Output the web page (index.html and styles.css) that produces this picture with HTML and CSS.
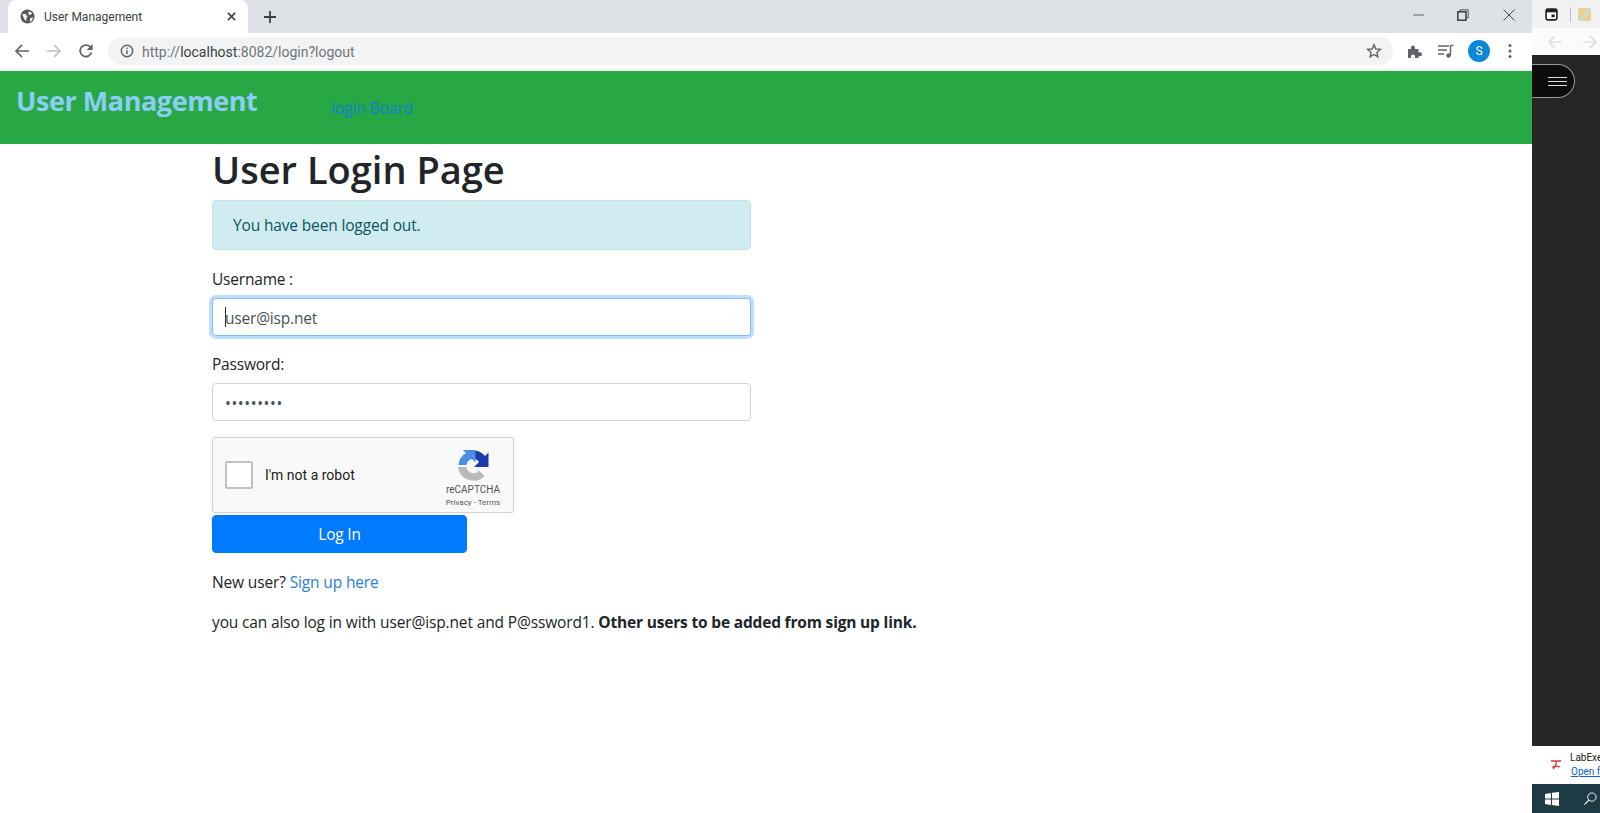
FILE: index.html
```html
<!DOCTYPE html>
<html lang="en">
<head>
    <meta charset="UTF-8">
    <title>User Management</title>
    <link rel="stylesheet" href="styles.css">
</head>
<body>
<div class="screen">
    <div class="browser">
        <div class="tabstrip">
            <div class="tab">
                <svg class="favicon" viewBox="0 0 16 16"><circle cx="8" cy="8" r="7.500" fill="#55595e"/><path d="M2.500 5.500l3-.5 2.500 3-1.500 2 .5 3-2.500-2zM10 2.500l3 2-2 2-2.500-1zM11 9.500l3-.5-1.500 3.500-2 1z" fill="#fff"/></svg>
                <span class="tab-title">User Management</span>
                <svg class="tab-close" viewBox="0 0 10 10"><path d="M1 1l8 8M9 1l-8 8" stroke="#3c4043" stroke-width="1.700"/></svg>
            </div>
            <svg class="newtab" viewBox="0 0 14 14"><path d="M7 1v12M1 7h12" stroke="#3c4043" stroke-width="1.800"/></svg>
            <div class="winctrls">
                <svg viewBox="0 0 12 12"><path d="M0 6h11" stroke="#777" stroke-width="1.200"/></svg>
                <svg viewBox="0 0 12 12"><path d="M3 2.500V.8h8.200V9H9.500" fill="none" stroke="#555" stroke-width="1"/><rect x=".8" y="2.800" width="8.200" height="8.400" fill="none" stroke="#222" stroke-width="1.300"/></svg>
                <svg viewBox="0 0 12 12"><path d="M.5.500l11 11M11.500.5l-11 11" stroke="#444" stroke-width="1"/></svg>
            </div>
        </div>
        <div class="toolbar">
            <svg class="tool" viewBox="0 0 16 16"><path d="M15 8H2M8 2L2 8l6 6" fill="none" stroke="#5f6368" stroke-width="1.700"/></svg>
            <svg class="tool" viewBox="0 0 16 16"><path d="M1 8h13M8 2l6 6-6 6" fill="none" stroke="#bdc1c6" stroke-width="1.700"/></svg>
            <svg class="tool" viewBox="0 0 16 16"><path d="M13.500 9.500A5.800 5.800 0 1 1 12 3.700L14 5.700" fill="none" stroke="#5f6368" stroke-width="1.700"/><path d="M14.600 1v6h-6z" fill="#5f6368"/></svg>
            <div class="omnibox">
                <svg class="info" viewBox="0 0 14 14"><circle cx="7" cy="7" r="5.700" fill="none" stroke="#5f6368" stroke-width="1.500"/><path d="M7 6.200v4M7 3.500v1.500" stroke="#5f6368" stroke-width="1.500"/></svg>
                <span class="url">http://<b>localhost</b>:8082/login?logout</span>
                <svg class="star" viewBox="0 0 16 16"><path d="M8 1.800l1.800 4.200 4.500.4-3.400 3 1 4.400L8 11.500l-3.900 2.300 1-4.400-3.400-3 4.500-.4z" fill="none" stroke="#5f6368" stroke-width="1.400"/></svg>
            </div>
            <svg class="tool ext" viewBox="0 0 16 16"><path d="M1 6h3V4.500a2 2 0 0 1 4 0V6h3.500v3.200H13a2 2 0 0 1 0 4h-1.500V15H8v-1.500a2 2 0 0 0-4 0V15H1z" fill="#5f6368"/></svg>
            <svg class="tool media" viewBox="0 0 16 16"><path d="M0 3h11M0 7h9M0 11h6" stroke="#5f6368" stroke-width="1.400"/><path d="M12.500 2.500V12" stroke="#5f6368" stroke-width="1.400"/><path d="M12.500 2.500h3" stroke="#5f6368" stroke-width="1.400"/><circle cx="10.500" cy="12.500" r="2.200" fill="#5f6368"/></svg>
            <div class="avatar">S</div>
            <svg class="tool dots" viewBox="0 0 4 16"><circle cx="2" cy="2.500" r="1.500" fill="#5f6368"/><circle cx="2" cy="8" r="1.500" fill="#5f6368"/><circle cx="2" cy="13.500" r="1.500" fill="#5f6368"/></svg>
        </div>
        <div class="page">
            <nav class="navbar">
                <a class="brand">User Management</a>
                <a class="nav-link">login Board</a>
            </nav>
            <main class="content">
                <h1>User Login Page</h1>
                <div class="form-box">
                    <div class="alert">You have been logged out.</div>
                    <label class="field-label">Username :</label>
                    <div class="input-wrap">
                        <input class="form-control focused" type="text" value="user@isp.net">
                        <span class="caret"></span>
                    </div>
                    <label class="field-label">Password:</label>
                    <div class="input-wrap">
                        <input class="form-control secret" type="password" value="P@ssword1">
                    </div>
                    <div class="captcha">
                        <span class="captcha-box"></span>
                        <span class="captcha-text">I'm not a robot</span>
                        <div class="captcha-brand">
                            <svg viewBox="0 0 32 32" class="captcha-logo">
                                <path d="M1 17h8.500A7 7 0 0 0 22 20.500L27.500 26A15.500 15.500 0 0 1 1 17z" fill="#bababa"/>
                                <path d="M17 .5A15 15 0 0 1 28 6l3.500-3.500V17H17l5-5A7.500 7.500 0 0 0 15.500 8.500z" fill="#1c3aa9"/>
                                <path d="M1.500 15A15 15 0 0 1 9 3L6 0h12.500v12.500L15 9a7.500 7.500 0 0 0-5.500 6z" fill="#4a90e2"/>
                            </svg>
                            <div class="captcha-name">reCAPTCHA</div>
                            <div class="captcha-links">Privacy - Terms</div>
                        </div>
                    </div>
                    <button class="btn-login" type="button">Log In</button>
                </div>
                <p class="signup">New user? <a>Sign up here</a></p>
                <p class="hint">you can also log in with user@isp.net and P@ssword1. <b>Other users to be added from sign up link.</b></p>
            </main>
        </div>
    </div>
    <aside class="side">
        <div class="side-tabs">
            <svg class="side-ic" viewBox="0 0 12 12"><rect x="1" y="1" width="10" height="10" rx="1.500" fill="#fff" stroke="#222" stroke-width="1.500"/><rect x="1" y="1" width="10" height="3" fill="#222"/><rect x="6" y="6" width="3" height="2.500" fill="#222"/></svg>
            <span class="side-sep"></span>
            <span class="side-fav"></span>
        </div>
        <div class="side-bar">
            <svg viewBox="0 0 14 14"><path d="M14 7H1M7 1L1 7l6 6" fill="none" stroke="#d5d7da" stroke-width="1.200"/></svg>
            <svg viewBox="0 0 14 14"><path d="M0 7h13M7 1l6 6-6 6" fill="none" stroke="#d5d7da" stroke-width="1.200"/></svg>
        </div>
        <div class="side-dark">
            <div class="pill"><span></span><span></span><span></span></div>
        </div>
        <div class="notice">
            <svg class="notice-ic" viewBox="0 0 14 14"><path d="M2 3h10M4 11c2-2 4-6 3-8M3 9c3-1 6-1 8 0" fill="none" stroke="#d9352c" stroke-width="1.300"/></svg>
            <div class="notice-text">
                <div>LabExe</div>
                <a>Open f</a>
            </div>
        </div>
        <div class="taskbar">
            <svg class="win" viewBox="0 0 14 14"><path d="M0 2l6-1v5.500H0zM7 .8L14 0v6.500H7zM0 7.500h6V13l-6-1zM7 7.500h7V14l-7-1z" fill="#fff"/></svg>
            <svg class="search" viewBox="0 0 14 14"><circle cx="8.500" cy="5.500" r="4.500" fill="none" stroke="#fff" stroke-width="1"/><path d="M5.200 8.800L.5 13.500" stroke="#fff" stroke-width="1.200"/></svg>
        </div>
    </aside>
</div>
</body>
</html>
```

FILE: styles.css
```css
html, body {
    margin: 0;
    padding: 0;
    height: 100%;
    overflow: hidden;
}

body {
    font-family: "Open Sans", "Noto Sans", sans-serif;
    color: #212529;
    background: #fff;
}

.screen {
    display: flex;
    width: 1600px;
    height: 813px;
}

/* browser window */
.browser {
    width: 1532px;
    display: flex;
    flex-direction: column;
    flex: none;
}

.tabstrip {
    height: 33px;
    background: #dee1e6;
    display: flex;
    align-items: flex-end;
    padding-left: 8px;
    flex: none;
}

.tab {
    width: 240px;
    height: 33px;
    box-sizing: border-box;
    background: #fff;
    border-radius: 8px 8px 0 0;
    display: flex;
    align-items: center;
    padding: 0 12px;
}

.favicon {
    width: 15px;
    height: 15px;
    flex: none;
}

.tab-title {
    margin-left: 9px;
    font-family: "Roboto", sans-serif;
    font-size: 12px;
    color: #3c4043;
    flex: 1;
}

.tab-close {
    width: 9px;
    height: 9px;
}

.newtab {
    width: 14px;
    height: 14px;
    margin: 0 0 9px 15px;
}

.winctrls {
    margin-left: auto;
    height: 30px;
    align-self: flex-start;
    display: flex;
    align-items: center;
    gap: 34px;
    padding-right: 17px;
}

.winctrls svg {
    width: 12px;
    height: 12px;
}

.winctrls svg:first-child {
    margin-right: -2px;
}

.toolbar {
    height: 36px;
    display: flex;
    align-items: center;
    background: #fff;
    padding: 0 0 0 14px;
    flex: none;
}

.tool {
    width: 16px;
    height: 16px;
    flex: none;
    margin-right: 16px;
}

.omnibox {
    width: 1285px;
    height: 28px;
    margin-left: -2px;
    background: #f1f3f4;
    border-radius: 14px;
    display: flex;
    align-items: center;
    padding: 0 11px 0 12px;
    box-sizing: border-box;
    flex: none;
}

.info {
    width: 14px;
    height: 14px;
    flex: none;
}

.url {
    margin-left: 8px;
    padding-top: 1px;
    font-family: "Roboto", sans-serif;
    font-size: 14px;
    color: #70757a;
    flex: 1;
}

.url b {
    font-weight: 400;
    color: #3c4043;
}

.star {
    width: 16px;
    height: 16px;
}

.ext {
    margin-left: 14px;
    margin-right: 15px;
}

.media {
    margin-right: 14px;
}

.avatar {
    width: 22px;
    height: 22px;
    border-radius: 50%;
    background: #0b87d8;
    color: #fff;
    font-family: "Roboto", sans-serif;
    font-size: 12px;
    line-height: 22px;
    text-align: center;
    flex: none;
}

.dots {
    width: 4px;
    margin: 0 0 0 18px;
}

/* page */
.page {
    flex: 1;
    border-top: 2px solid #eef0f1;
    background: #fff;
}

.navbar {
    height: 73px;
    background: #28a745;
    display: flex;
    align-items: flex-start;
}

.brand {
    margin: 12px 0 0 16px;
    font-size: 27px;
    line-height: 36px;
    font-weight: 700;
    letter-spacing: -0.45px;
    color: #8ccdf6;
}

.nav-link {
    margin: 25px 0 0 74px;
    font-size: 15.500px;
    line-height: 24px;
    letter-spacing: -0.1px;
    color: #0b7fd6;
}

.content {
    width: 760px;
    margin-left: 212px;
}

h1 {
    margin: 2px 0 8px;
    font-size: 38px;
    line-height: 46px;
    font-weight: 600;
    color: #212529;
}

.form-box {
    width: 539px;
}

.alert {
    box-sizing: border-box;
    height: 50px;
    background: #d1ecf1;
    border: 1px solid #bee5eb;
    border-radius: 4px;
    color: #0c5460;
    font-size: 15.500px;
    line-height: 48px;
    letter-spacing: -0.15px;
    padding-left: 20px;
}

.field-label {
    display: block;
    margin-top: 17px;
    font-size: 15.500px;
    line-height: 24px;
    letter-spacing: -0.2px;
}

.input-wrap {
    position: relative;
    margin-top: 7px;
}

.input-wrap + .field-label {
    margin-top: 16px;
}

.form-control {
    display: block;
    box-sizing: border-box;
    width: 100%;
    height: 38px;
    border: 1px solid #ced4da;
    border-radius: 4px;
    padding: 1px 12px 0;
    font-family: inherit;
    font-size: 15.500px;
    letter-spacing: -0.2px;
    color: #495057;
    background: #fff;
    outline: none;
}

.form-control.focused {
    border-color: #80bdff;
    box-shadow: 0 0 0 3px rgba(0, 123, 255, .25);
}

.form-control.secret {
    padding-top: 2px;
    letter-spacing: 0.6px;
}

.caret {
    position: absolute;
    left: 13px;
    top: 9px;
    width: 1px;
    height: 20px;
    background: #333;
}

.captcha {
    box-sizing: border-box;
    width: 302px;
    height: 76px;
    margin-top: 16px;
    background: #f9f9f9;
    border: 1px solid #d3d3d3;
    border-radius: 3px;
    box-shadow: 0 0 4px rgba(0, 0, 0, .08);
    display: flex;
    align-items: center;
    padding-left: 12px;
}

.captcha-box {
    width: 24px;
    height: 24px;
    background: #fff;
    border: 2px solid #c1c1c1;
    border-radius: 2px;
    flex: none;
}

.captcha-text {
    margin-left: 12px;
    font-family: "Roboto", sans-serif;
    font-size: 14px;
    color: #222;
}

.captcha-brand {
    margin-left: auto;
    width: 72px;
    margin-right: 4px;
    text-align: center;
    font-family: "Roboto", sans-serif;
    color: #555;
}

.captcha-logo {
    display: block;
    width: 32px;
    height: 32px;
    margin: 8px auto 1px;
}

.captcha-name {
    font-size: 10px;
    line-height: 13px;
}

.captcha-links {
    font-size: 8px;
    line-height: 13px;
}

.btn-login {
    display: block;
    width: 255px;
    height: 38px;
    margin-top: 2px;
    background: #007bff;
    border: 1px solid #007bff;
    border-radius: 4px;
    color: #fff;
    font-family: inherit;
    font-size: 15.500px;
    letter-spacing: -0.2px;
}

.signup,
.hint {
    margin: 0;
    font-size: 15.500px;
    line-height: 24px;
    letter-spacing: -0.14px;
    white-space: nowrap;
}

.signup {
    margin-top: 17px;
}

.signup a {
    color: #2a7de1;
}

.hint {
    margin-top: 16px;
}

.hint b {
    font-weight: 700;
    letter-spacing: -0.18px;
}

/* window behind on the right */
.side {
    width: 68px;
    flex: none;
    display: flex;
    flex-direction: column;
    overflow: hidden;
}

.side-tabs {
    height: 28px;
    background: #f1f1f1;
    display: flex;
    align-items: center;
    padding-left: 13px;
    flex: none;
}

.side-ic {
    width: 13px;
    height: 13px;
    flex: none;
}

.side-sep {
    width: 1px;
    height: 15px;
    background: #b8c0c8;
    margin-left: 12px;
    flex: none;
}

.side-fav {
    width: 13px;
    height: 13px;
    margin-left: 7px;
    background: linear-gradient(135deg, #efcd96 45%, #bfe0d0 50%, #bfe0d0 60%, #efcd96 65%);
    border-radius: 2px;
    flex: none;
}

.side-bar {
    height: 27px;
    background: #fbfbfb;
    display: flex;
    align-items: center;
    gap: 21px;
    padding-left: 16px;
    flex: none;
}

.side-bar svg {
    width: 14px;
    height: 14px;
    flex: none;
}

.side-dark {
    flex: 1;
    background: #262626;
    padding-top: 9px;
}

.pill {
    box-sizing: border-box;
    width: 43px;
    height: 34px;
    background: #0d0d0d;
    border: 1px solid #999;
    border-left: none;
    border-radius: 0 17px 17px 0;
    display: flex;
    flex-direction: column;
    justify-content: center;
    gap: 3px;
    padding-left: 16px;
}

.pill span {
    display: block;
    width: 19px;
    height: 1px;
    background: #ddd;
}

.notice {
    height: 38px;
    background: #fff;
    display: flex;
    align-items: center;
    padding-left: 17px;
    flex: none;
}

.notice-ic {
    width: 14px;
    height: 14px;
    flex: none;
}

.notice-text {
    margin-left: 7px;
    font-family: "Roboto", sans-serif;
    font-size: 10px;
    line-height: 14px;
    white-space: nowrap;
    color: #222;
}

.notice-text a {
    margin-left: 1px;
    color: #0a66c2;
    text-decoration: underline;
}

.taskbar {
    height: 29px;
    background: #1d3a45;
    display: flex;
    align-items: center;
    padding-left: 13px;
    flex: none;
}

.win {
    width: 14px;
    height: 14px;
}

.search {
    width: 13px;
    height: 13px;
    margin-left: 25px;
}
```
